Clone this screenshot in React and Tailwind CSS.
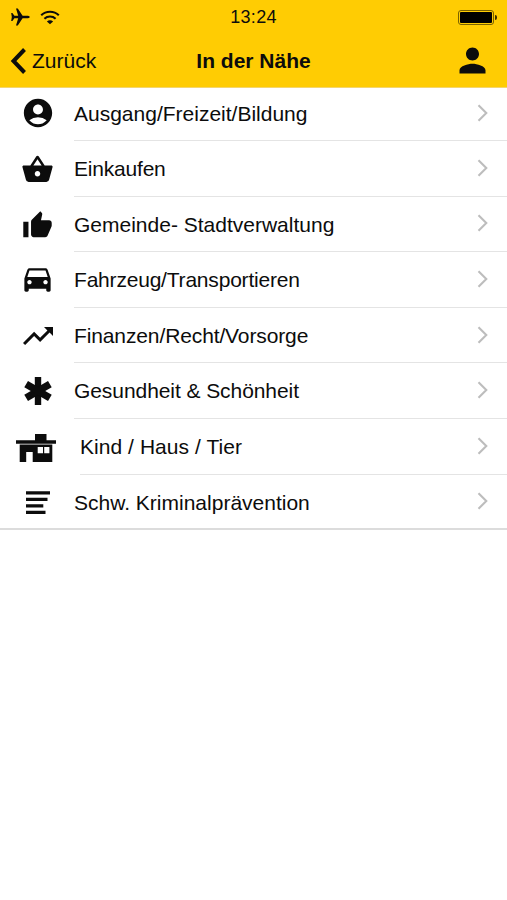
import React from 'react';
import {
  MdAccountCircle, MdShoppingBasket, MdThumbUp, MdDirectionsCar,
  MdTrendingUp, MdPerson,
} from 'react-icons/md';

const AsteriskIcon = ({ className }) => (
  <svg viewBox="0 0 28 28" fill="currentColor" className={className}>
    <rect x="10.800" y="0" width="6.400" height="28" />
    <rect x="10.300" y="0.300" width="7.400" height="27.400" transform="rotate(60 14 14)" />
    <rect x="10.300" y="0.300" width="7.400" height="27.400" transform="rotate(120 14 14)" />
  </svg>
);

const HouseIcon = ({ className }) => (
  <svg viewBox="0 0 40 28" fill="currentColor" className={className}>
    <path d="M19 0h11.500v6.200H40v3.600H0V6.200h19z" />
    <path fillRule="evenodd" d="M3.700 10.600h32.600V28H16.700V18H10.200v10H3.700zM21.700 13v6.300H27V13zM28.200 13v6.300h5.200V13z" />
  </svg>
);

const LinesIcon = ({ className }) => (
  <svg viewBox="0 0 24 24" fill="currentColor" className={className}>
    <path d="M0 .2h24v3.400H0zM0 6.700h21.500v3.400H0zM0 13.200h17.300v3.400H0zM0 19.700h19.500v3.400H0z" />
  </svg>
);

const AirplaneIcon = ({ className }) => (
  <svg viewBox="0 0 20 18" fill="currentColor" className={className}>
    <path d="M19.800 9c0 .8-1.500 1.300-3 1.300h-4.200L7.800 17.500H6L8.200 10.300H4.400L2.400 13H1.200L1.800 9 1.200 5h1.200l2 2.700h3.800L6 .5h1.800l4.800 7.200h4.200c1.500 0 3 .5 3 1.300z" />
  </svg>
);

const WifiIcon = ({ className }) => (
  <svg viewBox="0 0 20 15" fill="none" stroke="currentColor" strokeWidth="2.100" className={className}>
    <path d="M1.200 5.300C6 .5 14 .5 18.800 5.300" />
    <path d="M4.400 8.700c3.100-2.900 8.100-2.900 11.200 0" />
    <path d="M10 14.300L6.900 11.400c1.700-1.600 4.500-1.600 6.200 0z" fill="currentColor" stroke="none" />
  </svg>
);

const Chevron = ({ className }) => (
  <svg viewBox="0 0 11 18" fill="none" stroke="currentColor" strokeWidth="2.100" className={className}>
    <path d="M1.500 1.200L9.300 9l-7.800 7.800" />
  </svg>
);

const categories = [
  { icon: MdAccountCircle, label: 'Ausgang/Freizeit/Bildung', size: 'size-[34px] -mt-[3px]', row: 'h-[54px]' },
  { icon: MdShoppingBasket, label: 'Einkaufen', size: 'size-[33px] mt-0.5', text: 'tracking-[-0.2px]' },
  { icon: MdThumbUp, label: 'Gemeinde- Stadtverwaltung', size: 'size-[31px] mt-0.5' },
  { icon: MdDirectionsCar, label: 'Fahrzeug/Transportieren', size: 'size-[35px] -mt-0.5', text: 'tracking-[-0.2px]' },
  { icon: MdTrendingUp, label: 'Finanzen/Recht/Vorsorge', size: 'size-9', text: 'tracking-[-0.12px]' },
  { icon: AsteriskIcon, label: 'Gesundheit & Schönheit', size: 'size-7', text: 'tracking-[-0.07px]' },
  { icon: HouseIcon, label: 'Kind / Haus / Tier', size: 'w-10 h-7 mt-[3px]', column: 'w-20 pr-2', text: 'tracking-[0.05px]' },
  { icon: LinesIcon, label: 'Schw. Kriminalprävention', size: 'size-6 mt-[3px]', row: 'h-[53.4px]' },
];

const StatusBar = () => (
  <div className="flex h-[34px] items-center px-[10px]">
    <div className="flex flex-1 items-center gap-[10px]">
      <AirplaneIcon className="h-[18px] w-5" />
      <WifiIcon className="h-[15px] w-5" />
    </div>
    <span className="text-[18px] tracking-[0.3px]">13:24</span>
    <div className="flex flex-1 items-center justify-end">
      <div className="h-[15px] w-[36px] rounded-[3px] border border-[#7a6200] p-px">
        <div className="h-full w-[32px] rounded-[1px] bg-black" />
      </div>
      <div className="ml-px h-[5px] w-[2px] rounded-r-full bg-[#3a2e00]" />
    </div>
  </div>
);

const NavBar = () => (
  <div className="grid h-[53px] grid-cols-[1fr_auto_1fr] items-center px-[10px]">
    <button className="flex items-center gap-[6px]">
      <svg viewBox="0 0 16 26" fill="none" stroke="currentColor" strokeWidth="4" className="h-[26px] w-4">
        <path d="M14.500 1.500L3.500 13l11 11.500" />
      </svg>
      <span className="text-[21px]">Zurück</span>
    </button>
    <h1 className="text-[21px] font-bold">In der Nähe</h1>
    <div className="flex justify-end pr-[5px]">
      <MdPerson className="size-[39px]" />
    </div>
  </div>
);

const CategoryRow = ({ item, last }) => (
  <li className={`flex ${item.row || 'h-[55.6px]'}`}>
    <div className={`flex shrink-0 items-center justify-center ${item.column || 'w-[74px] pl-px'}`}>
      <item.icon className={item.size} />
    </div>
    <div className={`flex flex-1 items-center justify-between pr-[19px] ${last ? 'pt-0.5' : 'border-b border-[#e4e4e4] pt-px'}`}>
      <span className={`text-[21px] ${item.text || ''}`}>{item.label}</span>
      <Chevron className="h-[18px] w-[11px] -mt-0.5 text-[#bdbdbd]" />
    </div>
  </li>
);

const App = () => (
  <div className="min-h-screen bg-white font-['Liberation_Sans',Arial,sans-serif] text-[#0c0c0c]">
    <header className="h-[87px] bg-[#ffcc03]">
      <StatusBar />
      <NavBar />
    </header>
    <ul className="border-b-2 border-[#dcdcdc] shadow-[inset_0_1px_0_#f3d570]">
      {categories.map((item, i) => (
        <CategoryRow key={item.label} item={item} last={i === categories.length - 1} />
      ))}
    </ul>
  </div>
);

export default App;
